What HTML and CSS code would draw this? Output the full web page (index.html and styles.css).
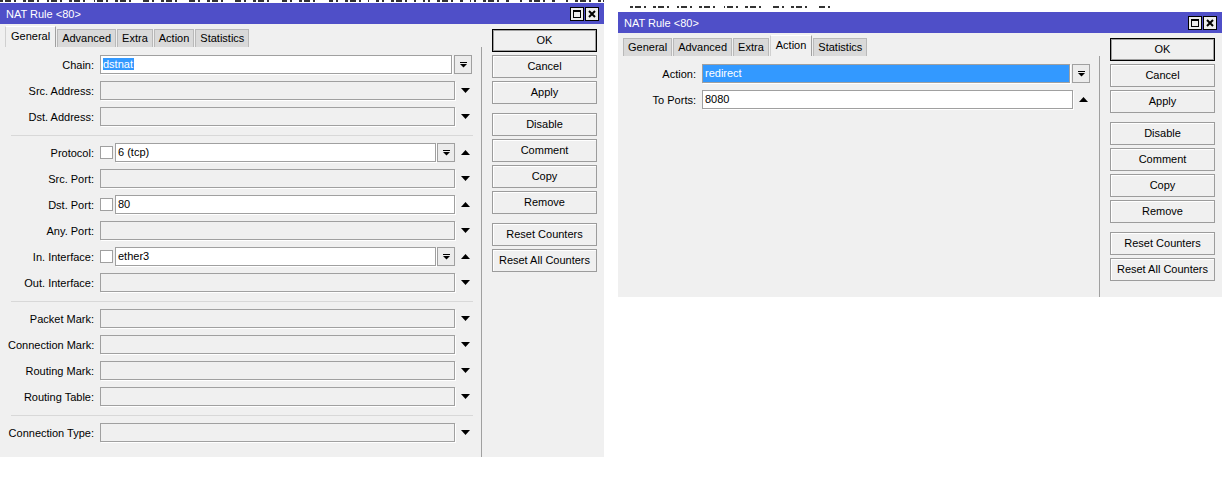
FILE: index.html
```html
<!DOCTYPE html>
<html lang="en">
<head>
	<meta charset="utf-8">
	<title>NAT Rule &lt;80&gt;</title>
	<link rel="stylesheet" href="styles.css">
</head>
<body>
<div class="desk">
	<!-- bits of the window lying behind -->
	<div class="behind behind-a"></div>
	<div class="behind behind-b"></div>

	<!-- General tab -->
	<div class="window win-rule">
		<div class="titlebar">
			<span class="title">NAT Rule &lt;80&gt;</span>
			<span class="wbtns">
				<svg class="wbtn" width="14" height="14" viewBox="0 0 14 14"><rect x="0.5" y="0.5" width="13" height="13" fill="#ececec" stroke="#000"/><rect x="3.5" y="3.5" width="7" height="7" fill="none" stroke="#000"/><rect x="3" y="3" width="8" height="2" fill="#000"/></svg>
				<svg class="wbtn" width="14" height="14" viewBox="0 0 14 14"><rect x="0.5" y="0.5" width="13" height="13" fill="#ececec" stroke="#000"/><path d="M4 4l6 6M10 4l-6 6" stroke="#000" stroke-width="2"/></svg>
			</span>
		</div>
		<div class="wbody">
			<div class="main">
				<div class="tabs">
					<span class="tab active">General</span>
					<span class="tab">Advanced</span>
					<span class="tab">Extra</span>
					<span class="tab">Action</span>
					<span class="tab">Statistics</span>
				</div>
				<div class="panel">
					<div class="row combo">
						<span class="lbl">Chain:</span>
						<span class="ctl">
							<span class="in on"><span class="hl">dstnat</span></span>
							<span class="drop"><svg width="7" height="6" viewBox="0 0 7 6"><rect width="7" height="1"/><path d="M0 2h7L3.5 5.5z"/></svg></span>
						</span>
					</div>
					<div class="row">
						<span class="lbl">Src. Address:</span>
						<span class="ctl"><span class="in"></span></span>
						<span class="arr"><svg width="9" height="5" viewBox="0 0 9 5"><path d="M0 0h9L4.5 5z"/></svg></span>
					</div>
					<div class="row">
						<span class="lbl">Dst. Address:</span>
						<span class="ctl"><span class="in"></span></span>
						<span class="arr"><svg width="9" height="5" viewBox="0 0 9 5"><path d="M0 0h9L4.5 5z"/></svg></span>
					</div>

					<div class="sep"></div>

					<div class="row">
						<span class="lbl">Protocol:</span>
						<span class="ctl">
							<span class="chk"></span>
							<span class="in on">6 (tcp)</span>
							<span class="drop"><svg width="7" height="6" viewBox="0 0 7 6"><rect width="7" height="1"/><path d="M0 2h7L3.5 5.5z"/></svg></span>
						</span>
						<span class="arr"><svg width="9" height="5" viewBox="0 0 9 5"><path d="M0 5h9L4.5 0z"/></svg></span>
					</div>
					<div class="row">
						<span class="lbl">Src. Port:</span>
						<span class="ctl"><span class="in"></span></span>
						<span class="arr"><svg width="9" height="5" viewBox="0 0 9 5"><path d="M0 0h9L4.5 5z"/></svg></span>
					</div>
					<div class="row">
						<span class="lbl">Dst. Port:</span>
						<span class="ctl">
							<span class="chk"></span>
							<span class="in on">80</span>
						</span>
						<span class="arr"><svg width="9" height="5" viewBox="0 0 9 5"><path d="M0 5h9L4.5 0z"/></svg></span>
					</div>
					<div class="row">
						<span class="lbl">Any. Port:</span>
						<span class="ctl"><span class="in"></span></span>
						<span class="arr"><svg width="9" height="5" viewBox="0 0 9 5"><path d="M0 0h9L4.5 5z"/></svg></span>
					</div>
					<div class="row">
						<span class="lbl">In. Interface:</span>
						<span class="ctl">
							<span class="chk"></span>
							<span class="in on">ether3</span>
							<span class="drop"><svg width="7" height="6" viewBox="0 0 7 6"><rect width="7" height="1"/><path d="M0 2h7L3.5 5.5z"/></svg></span>
						</span>
						<span class="arr"><svg width="9" height="5" viewBox="0 0 9 5"><path d="M0 5h9L4.5 0z"/></svg></span>
					</div>
					<div class="row">
						<span class="lbl">Out. Interface:</span>
						<span class="ctl"><span class="in"></span></span>
						<span class="arr"><svg width="9" height="5" viewBox="0 0 9 5"><path d="M0 0h9L4.5 5z"/></svg></span>
					</div>

					<div class="sep"></div>

					<div class="row">
						<span class="lbl">Packet Mark:</span>
						<span class="ctl"><span class="in"></span></span>
						<span class="arr"><svg width="9" height="5" viewBox="0 0 9 5"><path d="M0 0h9L4.5 5z"/></svg></span>
					</div>
					<div class="row">
						<span class="lbl">Connection Mark:</span>
						<span class="ctl"><span class="in"></span></span>
						<span class="arr"><svg width="9" height="5" viewBox="0 0 9 5"><path d="M0 0h9L4.5 5z"/></svg></span>
					</div>
					<div class="row">
						<span class="lbl">Routing Mark:</span>
						<span class="ctl"><span class="in"></span></span>
						<span class="arr"><svg width="9" height="5" viewBox="0 0 9 5"><path d="M0 0h9L4.5 5z"/></svg></span>
					</div>
					<div class="row">
						<span class="lbl">Routing Table:</span>
						<span class="ctl"><span class="in"></span></span>
						<span class="arr"><svg width="9" height="5" viewBox="0 0 9 5"><path d="M0 0h9L4.5 5z"/></svg></span>
					</div>

					<div class="sep"></div>

					<div class="row">
						<span class="lbl">Connection Type:</span>
						<span class="ctl"><span class="in"></span></span>
						<span class="arr"><svg width="9" height="5" viewBox="0 0 9 5"><path d="M0 0h9L4.5 5z"/></svg></span>
					</div>
				</div>
			</div>
			<div class="side">
				<div class="btn default">OK</div>
				<div class="btn">Cancel</div>
				<div class="btn">Apply</div>
				<div class="btn gap">Disable</div>
				<div class="btn">Comment</div>
				<div class="btn">Copy</div>
				<div class="btn">Remove</div>
				<div class="btn gap">Reset Counters</div>
				<div class="btn">Reset All Counters</div>
			</div>
		</div>
	</div>

	<!-- Action tab -->
	<div class="window win-action">
		<div class="titlebar">
			<span class="title">NAT Rule &lt;80&gt;</span>
			<span class="wbtns">
				<svg class="wbtn" width="14" height="14" viewBox="0 0 14 14"><rect x="0.5" y="0.5" width="13" height="13" fill="#ececec" stroke="#000"/><rect x="3.5" y="3.5" width="7" height="7" fill="none" stroke="#000"/><rect x="3" y="3" width="8" height="2" fill="#000"/></svg>
				<svg class="wbtn" width="14" height="14" viewBox="0 0 14 14"><rect x="0.5" y="0.5" width="13" height="13" fill="#ececec" stroke="#000"/><path d="M4 4l6 6M10 4l-6 6" stroke="#000" stroke-width="2"/></svg>
			</span>
		</div>
		<div class="wbody">
			<div class="main">
				<div class="tabs">
					<span class="tab">General</span>
					<span class="tab">Advanced</span>
					<span class="tab">Extra</span>
					<span class="tab active">Action</span>
					<span class="tab">Statistics</span>
				</div>
				<div class="panel">
					<div class="row combo">
						<span class="lbl">Action:</span>
						<span class="ctl">
							<span class="in sel">redirect</span>
							<span class="drop"><svg width="7" height="6" viewBox="0 0 7 6"><rect width="7" height="1"/><path d="M0 2h7L3.5 5.5z"/></svg></span>
						</span>
					</div>
					<div class="row">
						<span class="lbl">To Ports:</span>
						<span class="ctl"><span class="in on">8080</span></span>
						<span class="arr"><svg width="9" height="5" viewBox="0 0 9 5"><path d="M0 5h9L4.5 0z"/></svg></span>
					</div>
				</div>
			</div>
			<div class="side">
				<div class="btn default">OK</div>
				<div class="btn">Cancel</div>
				<div class="btn">Apply</div>
				<div class="btn gap">Disable</div>
				<div class="btn">Comment</div>
				<div class="btn">Copy</div>
				<div class="btn">Remove</div>
				<div class="btn gap">Reset Counters</div>
				<div class="btn">Reset All Counters</div>
			</div>
		</div>
	</div>
</div>
</body>
</html>
```

FILE: styles.css
```css
* {
	box-sizing: border-box;
}

body {
	margin: 0;
	background: #ffffff;
	color: #000000;
	font-family: "Liberation Sans", Arial, sans-serif;
	font-size: 11px;
}

.desk {
	position: relative;
	width: 1225px;
	height: 479px;
	overflow: hidden;
}

/* what peeks out from the window underneath */
.behind {
	position: absolute;
	height: 2px;
	background:
		repeating-linear-gradient(90deg, #333 0 3px, transparent 3px 5px, #333 5px 11px, transparent 11px 14px, #333 14px 16px, transparent 16px 23px),
		repeating-linear-gradient(90deg, transparent 0 40px, #fff 40px 47px);
	background-blend-mode: lighten;
}

.behind-a {
	left: 0;
	top: 0;
	width: 604px;
}

.behind-b {
	left: 630px;
	top: 6px;
	width: 200px;
}

.window {
	position: absolute;
	background: #f0f0f0;
	display: flex;
	flex-direction: column;
}

.win-rule {
	left: 0;
	top: 3px;
	width: 604px;
	height: 454px;
}

.win-action {
	left: 618px;
	top: 12px;
	width: 604px;
	height: 285px;
}

.titlebar {
	height: 21px;
	background: #4f4fc8;
	color: #ffffff;
	display: flex;
	align-items: center;
	justify-content: space-between;
	padding: 0 5px 0 6px;
}

.wbtns {
	display: flex;
	gap: 1px;
}

.wbtn {
	display: block;
}

.wbody {
	flex: 1;
	display: flex;
}

.main {
	width: 482px;
	display: flex;
	flex-direction: column;
}

.tabs {
	height: 23px;
	display: flex;
	align-items: flex-end;
	padding-left: 5px;
}

.tab {
	height: 18px;
	line-height: 17px;
	padding: 0 4px;
	margin-right: 1px;
	background: #d9d9d9;
	border: 1px solid #b9b9b9;
	border-bottom: none;
	white-space: nowrap;
}

.tab.active {
	height: 21px;
	line-height: 19px;
	padding: 0 5px;
	background: #f0f0f0;
	border-color: #ffffff #a0a0a0 #f0f0f0 #d0d0d0;
}

.panel {
	flex: 1;
	border-right: 1px solid #a0a0a0;
	padding: 8px 5px 0 8px;
	display: flex;
	flex-direction: column;
	gap: 7px;
}

.row {
	height: 19px;
	display: flex;
	align-items: center;
}

.lbl {
	width: 86px;
	margin-right: 6px;
	text-align: right;
	white-space: nowrap;
}

.win-action .lbl {
	width: 70px;
}

.ctl {
	flex: 1;
	height: 19px;
	display: flex;
	align-items: center;
}

.combo .ctl {
	margin-right: 4px;
}

.in {
	flex: 1;
	height: 19px;
	line-height: 17px;
	padding-left: 2px;
	background: #f0f0f0;
	border: 1px solid #a0a0a0;
	box-shadow: 1px 1px 0 #ffffff;
	white-space: nowrap;
}

.in.on {
	background: #ffffff;
}

.in.sel {
	background: #3399ff;
	color: #ffffff;
}

.hl {
	background: #3399ff;
	color: #ffffff;
	padding-right: 1px;
}

.drop {
	width: 18px;
	height: 19px;
	margin-left: 1px;
	background: #ececec;
	border: 1px solid #a0a0a0;
	display: flex;
	align-items: center;
	justify-content: center;
}

.combo .drop {
	margin-left: 2px;
}

.chk {
	width: 13px;
	height: 13px;
	margin-right: 2px;
	background: #ffffff;
	border: 1px solid #a0a0a0;
}

.arr {
	width: 21px;
	display: flex;
	justify-content: center;
}

.arr svg {
	display: block;
}

.sep {
	height: 1px;
	margin: 2px 3px 0 3px;
	background: #d8d8d8;
}

.side {
	flex: 1;
	padding: 5px 7px 0 10px;
	display: flex;
	flex-direction: column;
	gap: 3px;
}

.btn {
	height: 23px;
	line-height: 21px;
	text-align: center;
	background: #f0f0f0;
	border: 1px solid #9c9c9c;
	box-shadow: inset 1px 1px 0 #ffffff;
	white-space: nowrap;
}

.btn.default {
	border-color: #000000;
	box-shadow: inset 0 0 0 1px #a0a0a0;
}

.btn.gap {
	margin-top: 6px;
}
```
